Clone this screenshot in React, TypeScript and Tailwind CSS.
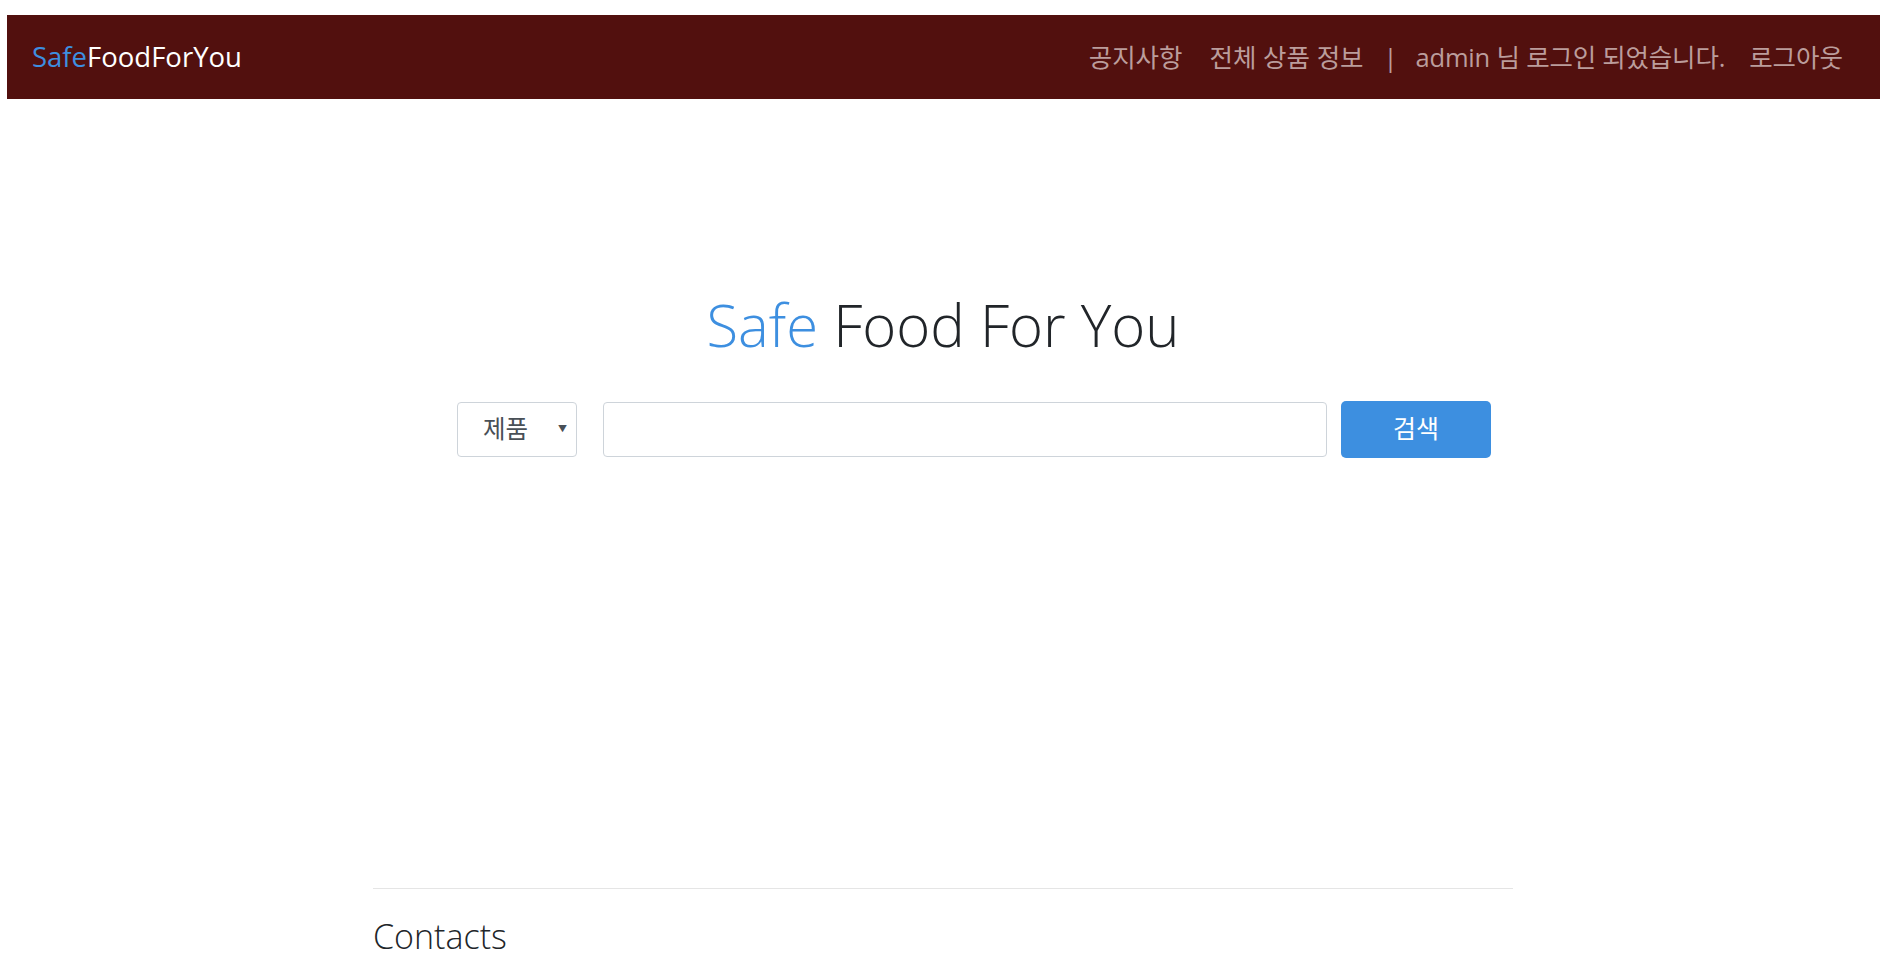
import { useState } from 'react';

const font = { fontFamily: '"Open Sans", "Noto Sans CJK KR", sans-serif' };

function NavBar() {
  return (
    <nav className="mt-[15px] ml-[7px] w-[1873px] h-[84px] bg-[#52100e] flex items-center justify-between pl-[25px] pr-[37px]">
      <a href="#" className="text-[27.5px] leading-none text-white">
        <span className="text-[#3d8fe0]">Safe</span>FoodForYou
      </a>
      <ul className="flex items-center text-[25.5px] text-[#bb9d9c]">
        <li className="mr-[27px]">
          <a href="#">공지사항</a>
        </li>
        <li className="mr-[20px]">
          <a href="#">전체 상품 정보</a>
        </li>
        <li className="mr-[18px]">|</li>
        <li className="mr-[24px] tracking-[-0.2px]">admin 님 로그인 되었습니다.</li>
        <li>
          <a href="#">로그아웃</a>
        </li>
      </ul>
    </nav>
  );
}

function SearchForm() {
  const [kind, setKind] = useState('제품');
  const [query, setQuery] = useState('');

  return (
    <form
      onSubmit={(e) => e.preventDefault()}
      className="flex items-center pl-[84px]"
    >
      <div className="relative w-[120px] h-[55px]">
        <select
          value={kind}
          onChange={(e) => setKind(e.target.value)}
          className="appearance-none w-full h-full border border-[#ced4da] rounded-[4px] bg-white pl-[25px] text-[24.5px] text-[#495057] outline-none"
        >
          <option>제품</option>
          <option>제조사</option>
          <option>재료</option>
        </select>
        <span className="pointer-events-none absolute right-[10px] top-1/2 -translate-y-1/2 text-[9px] text-[#495057]">
          ▼
        </span>
      </div>
      <input
        value={query}
        onChange={(e) => setQuery(e.target.value)}
        className="ml-[26px] w-[724px] h-[55px] border border-[#ced4da] rounded-[4px] px-3 text-[20px] outline-none"
      />
      <button
        type="submit"
        className="ml-[14px] w-[150px] h-[57px] rounded-[5px] bg-[#3d8fe0] text-white text-[25px]"
      >
        검색
      </button>
    </form>
  );
}

export default function App() {
  return (
    <div style={font} className="bg-white text-[#212529] pb-[200px]">
      <NavBar />
      <main className="ml-[373px] w-[1140px]">
        <section className="pt-[191px] h-[789px]">
          <h1 className="text-center text-[58px] leading-[1.2] font-light mb-[41px]">
            <span className="text-[#3d8fe0]">Safe</span> Food For You
          </h1>
          <SearchForm />
        </section>
        <footer>
          <hr className="border-t border-[#e5e5e5]" />
          <h2 className="mt-[27px] text-[34px] leading-[1.2] font-light">Contacts</h2>
          <p className="mt-4 text-[16px]">SSAFY 서울 캠퍼스</p>
        </footer>
      </main>
    </div>
  );
}
